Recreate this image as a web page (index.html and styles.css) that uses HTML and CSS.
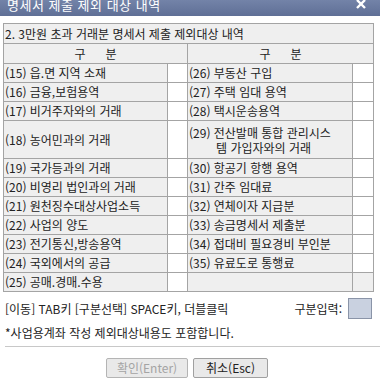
FILE: index.html
```html
<!DOCTYPE html>
<html lang="ko">
<head>
    <meta charset="UTF-8">
    <title>명세서 제출 제외 대상 내역</title>
    <link rel="stylesheet" href="styles.css">
</head>
<body>
    <div class="titlebar">
        <span class="title">명세서 제출 제외 대상 내역</span>
        <svg class="close" width="10" height="9" viewBox="0 0 10 9">
            <path d="M1 0 L9 8 M9 0 L1 8" stroke="white" stroke-width="2.4" fill="none"/>
        </svg>
    </div>

    <table class="grid">
        <colgroup>
            <col class="c-label"><col class="c-check"><col class="c-label2"><col class="c-check2">
        </colgroup>
        <tr class="head">
            <td colspan="4" class="caption">2. 3만원 초과 거래분 명세서 제출 제외대상 내역</td>
        </tr>
        <tr class="head">
            <td colspan="2" class="center">구&nbsp;&nbsp;&nbsp;&nbsp;&nbsp;&nbsp;분</td>
            <td colspan="2" class="center">구&nbsp;&nbsp;&nbsp;&nbsp;&nbsp;&nbsp;분</td>
        </tr>
        <tr>
            <td>(15) 읍.면 지역 소재</td><td class="chk"></td>
            <td>(26) 부동산 구입</td><td class="chk"></td>
        </tr>
        <tr>
            <td>(16) 금융,보험용역</td><td class="chk"></td>
            <td>(27) 주택 임대 용역</td><td class="chk"></td>
        </tr>
        <tr>
            <td>(17) 비거주자와의 거래</td><td class="chk"></td>
            <td>(28) 택시운송용역</td><td class="chk"></td>
        </tr>
        <tr class="tall">
            <td>(18) 농어민과의 거래</td><td class="chk"></td>
            <td><div class="hang">(29) 전산발매 통합 관리시스<br>템 가입자와의 거래</div></td><td class="chk"></td>
        </tr>
        <tr>
            <td>(19) 국가등과의 거래</td><td class="chk"></td>
            <td>(30) 항공기 항행 용역</td><td class="chk"></td>
        </tr>
        <tr>
            <td>(20) 비영리 법인과의 거래</td><td class="chk"></td>
            <td>(31) 간주 임대료</td><td class="chk"></td>
        </tr>
        <tr>
            <td>(21) 원천징수대상사업소득</td><td class="chk"></td>
            <td>(32) 연체이자 지급분</td><td class="chk"></td>
        </tr>
        <tr>
            <td>(22) 사업의 양도</td><td class="chk"></td>
            <td>(33) 송금명세서 제출분</td><td class="chk"></td>
        </tr>
        <tr>
            <td>(23) 전기통신,방송용역</td><td class="chk"></td>
            <td>(34) 접대비 필요경비 부인분</td><td class="chk"></td>
        </tr>
        <tr>
            <td>(24) 국외에서의 공급</td><td class="chk"></td>
            <td>(35) 유료도로 통행료</td><td class="chk"></td>
        </tr>
        <tr>
            <td>(25) 공매.경매.수용</td><td class="chk"></td>
            <td></td><td></td>
        </tr>
    </table>

    <div class="hint-row">
        <span>[이동] TAB키 [구분선택] SPACE키, 더블클릭</span>
        <span class="input-label">구분입력:</span>
        <span class="input-box"></span>
    </div>
    <div class="note">*사업용계좌 작성 제외대상내용도 포함합니다.</div>

    <div class="buttons">
        <button class="btn" disabled>확인(Enter)</button>
        <button class="btn">취소(Esc)</button>
    </div>
</body>
</html>
```

FILE: styles.css
```css
body {
    margin: 0;
    background-color: white;
    font-family: "Noto Sans CJK KR", "DejaVu Sans", sans-serif;
    font-size: 12px;
    color: #222;
    overflow: hidden;
}
.titlebar {
    height: 16px;
    background: linear-gradient(#7383a8, #5f6f96);
    color: white;
    display: flex;
    justify-content: space-between;
    overflow: hidden;
}
.title {
    font-size: 13px;
    line-height: 13px;
    margin-top: -2px;
    padding-left: 7px;
    letter-spacing: 0.5px;
}
.close {
    margin-right: 14px;
}
.grid {
    margin: 7px 0 0 3px;
    width: 370px;
    table-layout: fixed;
    border-collapse: collapse;
    border: 1px solid #a4a4a4;
}
.c-label { width: 164px; }
.c-check { width: 20px; }
.c-label2 { width: 165px; }
.c-check2 { width: 21px; }
.grid td {
    border: 1px solid #a4a4a4;
    background-color: #efefef;
    height: 18px;
    padding: 0 0 0 1px;
    line-height: 14px;
    white-space: nowrap;
    overflow: hidden;
}
.grid .head td {
    height: 19px;
}
.grid .tall td {
    height: 37px;
}
.grid td.chk {
    background-color: white;
}
.grid td.center {
    text-align: center;
    padding: 0;
}
.hang {
    padding-left: 27px;
    text-indent: -27px;
    line-height: 15px;
    white-space: normal;
}
.hint-row {
    display: flex;
    align-items: center;
    margin: 6px 8px 0 5px;
    height: 21px;
}
.input-label {
    margin-left: auto;
    margin-right: 6px;
}
.input-box {
    width: 22px;
    height: 19px;
    border: 1px solid #8a94a8;
    background-color: #c9d1e0;
}
.note {
    margin: 5px 0 0 5px;
    height: 17px;
    line-height: 17px;
    border-bottom: 1px solid #c8c8c8;
    padding-bottom: 5px;
}
.buttons {
    display: flex;
    justify-content: center;
    gap: 5px;
    padding: 11px 6px 0 0;
}
.btn {
    font-family: "Noto Sans CJK KR", "DejaVu Sans", sans-serif;
    font-size: 12px;
    color: #222;
    height: 20px;
    width: 75px;
    padding: 0;
    line-height: 16px;
    background-color: #e9e9e9;
    border: 1px solid #a0a0a0;
    border-radius: 2px;
}
.btn:disabled {
    color: #a4a4a4;
    border-color: #b4b4b4;
    width: 82px;
}
```
